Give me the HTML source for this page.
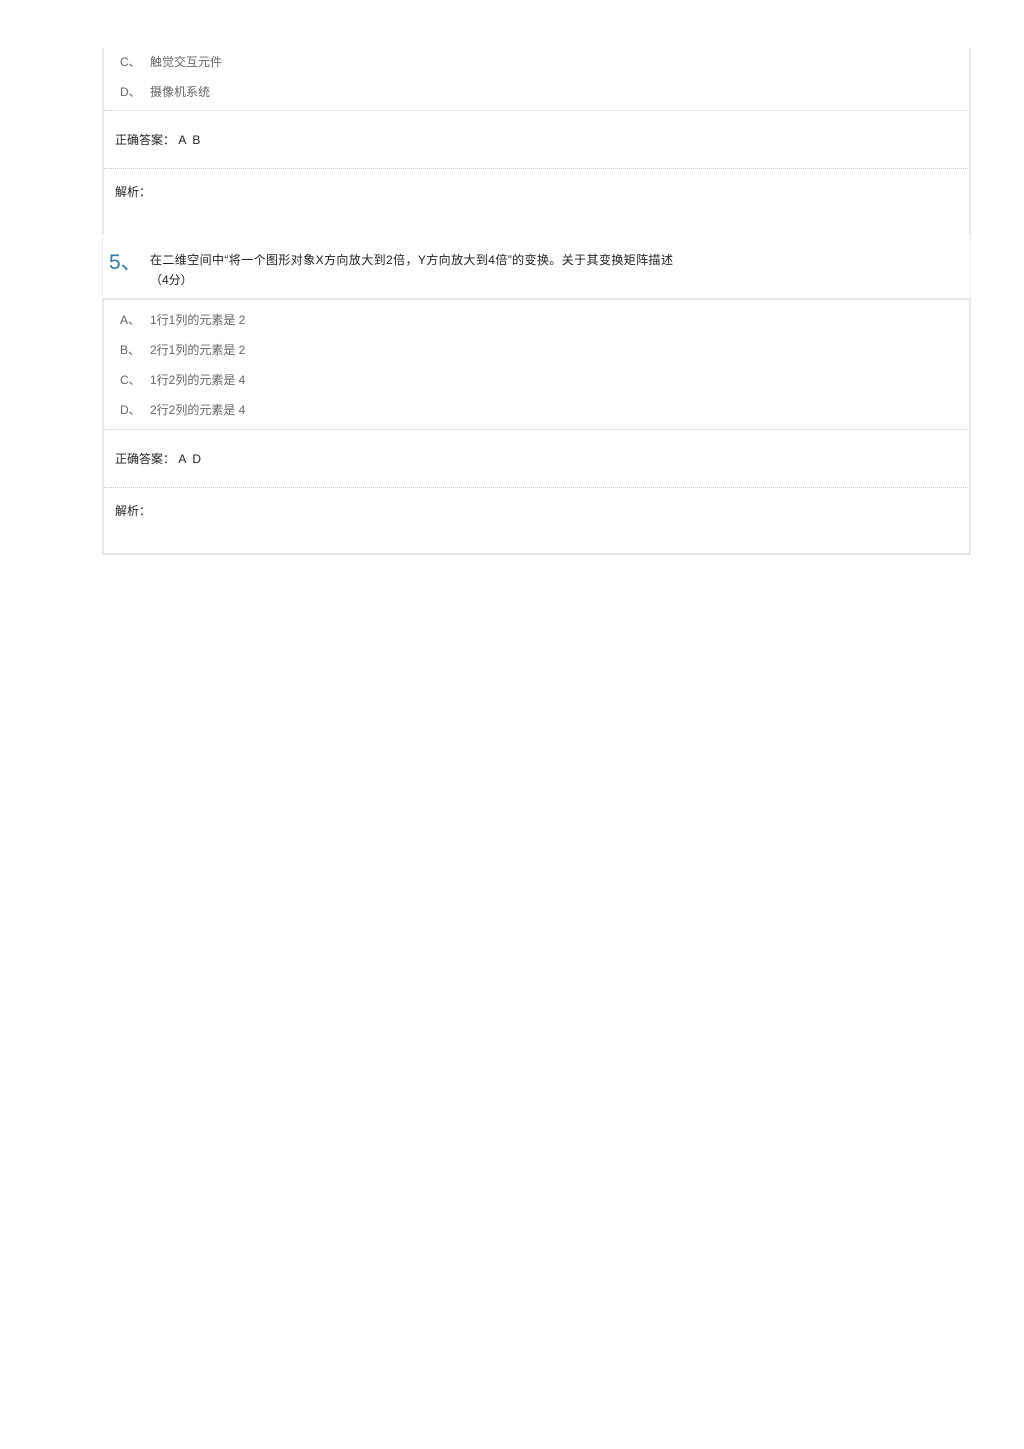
<!DOCTYPE html>
<html><head><meta charset="utf-8"><style>
body{margin:0;background:#fff;width:1024px;height:1449px;position:relative;font-family:"Liberation Sans","Noto Sans CJK SC",sans-serif;font-size:12px;}
.abs{position:absolute;white-space:nowrap;}
.opt{color:#666;}
.ans{color:#222;}
.dot{position:absolute;left:104px;width:866px;border-top:1px dotted #ccc;height:0;}
</style></head><body>
<div style="position:absolute;left:102px;top:48px;width:2px;height:186px;background:#e6e6e6"></div>
<div style="position:absolute;left:969px;top:48px;width:2px;height:186px;background:#e6e6e6"></div>
<div style="position:absolute;left:102px;top:234px;width:1px;height:64px;background:#eee"></div>
<div style="position:absolute;left:970px;top:234px;width:1px;height:64px;background:#eee"></div>
<div style="position:absolute;left:102px;top:298px;width:869px;height:2px;background:#e6e6e6"></div>
<div style="position:absolute;left:102px;top:298px;width:2px;height:257px;background:#e6e6e6"></div>
<div style="position:absolute;left:969px;top:298px;width:2px;height:257px;background:#e6e6e6"></div>
<div style="position:absolute;left:102px;top:553px;width:869px;height:2px;background:#e6e6e6"></div>

<div class="abs opt" style="left:120px;top:53px">C、</div><div class="abs opt" style="left:150px;top:53px">触觉交互元件</div>
<div class="abs opt" style="left:120px;top:83px">D、</div><div class="abs opt" style="left:150px;top:83px">摄像机系统</div>
<div class="dot" style="top:110px"></div>
<div class="abs ans" style="left:115px;top:131px">正确答案： A &nbsp;B</div>
<div class="dot" style="top:168px"></div>
<div class="abs ans" style="left:115px;top:183px">解析：</div>

<div class="abs" style="left:109px;top:246px;font-size:21px;color:#2e7ea6">5、</div>
<div class="abs ans" style="left:150px;top:251px;letter-spacing:0.4px">在二维空间中“将一个图形对象X方向放大到2倍，Y方向放大到4倍”的变换。关于其变换矩阵描述</div>
<div class="abs ans" style="left:150px;top:271px">（4分）</div>

<div class="abs opt" style="left:120px;top:311px">A、</div><div class="abs opt" style="left:150px;top:311px">1行1列的元素是 2</div>
<div class="abs opt" style="left:120px;top:341px">B、</div><div class="abs opt" style="left:150px;top:341px">2行1列的元素是 2</div>
<div class="abs opt" style="left:120px;top:371px">C、</div><div class="abs opt" style="left:150px;top:371px">1行2列的元素是 4</div>
<div class="abs opt" style="left:120px;top:401px">D、</div><div class="abs opt" style="left:150px;top:401px">2行2列的元素是 4</div>
<div class="dot" style="top:429px"></div>
<div class="abs ans" style="left:115px;top:450px">正确答案： A &nbsp;D</div>
<div class="dot" style="top:487px"></div>
<div class="abs ans" style="left:115px;top:502px">解析：</div>
</body></html>
